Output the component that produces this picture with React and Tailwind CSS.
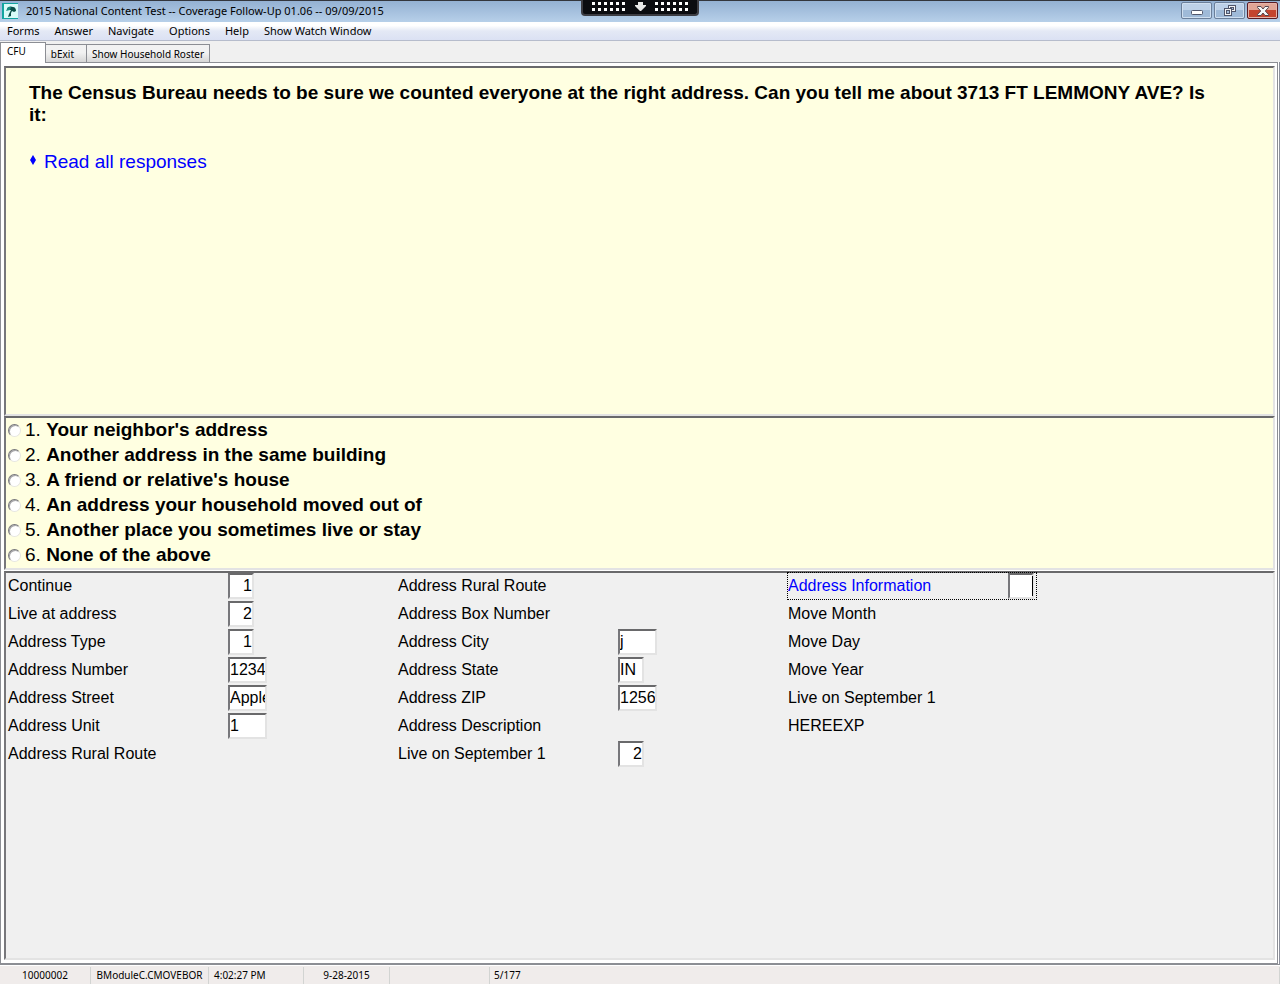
import { useState } from 'react'

const menus = ['Forms', 'Answer', 'Navigate', 'Options', 'Help', 'Show Watch Window']

const answers = [
  "Your neighbor's address",
  'Another address in the same building',
  "A friend or relative's house",
  'An address your household moved out of',
  'Another place you sometimes live or stay',
  'None of the above',
]

// size: "s" and "m" are the two box widths; rows without a size have no entry box
const columns = [
  [
    { id: 'continue', label: 'Continue', value: '1', size: 's', right: true },
    { id: 'live', label: 'Live at address', value: '2', size: 's', right: true },
    { id: 'type', label: 'Address Type', value: '1', size: 's', right: true },
    { id: 'number', label: 'Address Number', value: '1234', size: 'm' },
    { id: 'street', label: 'Address Street', value: 'Apple', size: 'm' },
    { id: 'unit', label: 'Address Unit', value: '1', size: 'm' },
    { id: 'route', label: 'Address Rural Route' },
  ],
  [
    { id: 'route2', label: 'Address Rural Route' },
    { id: 'box', label: 'Address Box Number' },
    { id: 'city', label: 'Address City', value: 'j', size: 'm' },
    { id: 'state', label: 'Address State', value: 'IN', size: 's' },
    { id: 'zip', label: 'Address ZIP', value: '1256', size: 'm' },
    { id: 'description', label: 'Address Description' },
    { id: 'september', label: 'Live on September 1', value: '2', size: 's', right: true },
  ],
  [
    { id: 'info', label: 'Address Information', value: '', size: 's', right: true, active: true },
    { id: 'month', label: 'Move Month' },
    { id: 'day', label: 'Move Day' },
    { id: 'year', label: 'Move Year' },
    { id: 'september2', label: 'Live on September 1' },
    { id: 'hereexp', label: 'HEREEXP' },
  ],
]

const sunken = 'border-2 border-t-[#69696b] border-l-[#77777b] border-r-[#e3e3e3] border-b-[#e3e3e3]'

function AppIcon() {
  return (
    <svg viewBox="0 0 16 16" className="h-4 w-4 shrink-0">
      <rect width="16" height="16" fill="#12a5a0" />
      <rect x="2" y="1" width="14" height="14" fill="#d9fbf8" />
      <path d="M5 6 C6 3 9 3 11 4 C13 4 14 6 14 8 L12 9 L10 8 L9 10 L9 13 L6 14 L7 11 L9 7 L7 7 Z" fill="#0b4f49" />
      <path d="M4 8 L6 4 L9 4 L8 7 Z" fill="#1c8c83" />
    </svg>
  )
}

function DotGrid() {
  return (
    <svg viewBox="0 0 33 9" className="h-[9px] w-[33px]" shapeRendering="crispEdges">
      {[0, 6, 12, 18, 24, 30].map((x) => (
        <g key={x} fill="#fff">
          <rect x={x} y="0" width="3" height="3" />
          <rect x={x} y="6" width="3" height="3" />
        </g>
      ))}
    </svg>
  )
}

function ConnectionBar() {
  return (
    <div className="absolute -top-px left-1/2 flex h-4 w-[118px] -translate-x-1/2 items-start justify-between rounded-b-[4px] border-2 border-t-0 border-[#3c3c42] bg-[#0b0c10] px-[9px] pt-[2px]">
      <DotGrid />
      <svg viewBox="0 0 11 9" className="h-[9px] w-[11px]" fill="#e8e8e8">
        <path d="M3 0 H8 V3 H11 V4 L6 9 H5 L0 4 V3 H3 Z" />
      </svg>
      <DotGrid />
    </div>
  )
}

function WindowButton({ label, close, children }) {
  return (
    <button
      aria-label={label}
      className={
        close
          ? 'flex h-[17px] w-[31px] items-center justify-center rounded-[2px] border border-[#5a1c24] bg-linear-to-b from-[#e0a596] from-45% to-[#c4442e] to-50% shadow-[inset_0_0_0_1px_#e6b3a8]'
          : 'flex h-[17px] w-[31px] items-center justify-center rounded-[2px] border border-[#6b7f9a] bg-linear-to-b from-[#bdd1e8] from-45% to-[#9fbad8] to-50% shadow-[inset_0_0_0_1px_#cfdff0]'
      }
    >
      {children}
    </button>
  )
}

function TitleBar() {
  return (
    <header className="relative flex h-[22px] items-center border-t border-[#33363d] bg-linear-to-b from-[#94b1d3] to-[#b7d0e9] px-[2px] pb-[2px]">
      <AppIcon />
      <h1 className="pl-2 font-['Noto_Sans'] text-[11px] leading-4">
        2015 National Content Test -- Coverage Follow-Up 01.06 -- 09/09/2015
      </h1>
      <ConnectionBar />
      <div className="ml-auto flex gap-[2px]">
        <WindowButton label="Minimize">
          <svg viewBox="0 0 12 6" className="mt-1 h-[6px] w-3">
            <rect x="0.5" y="0.5" width="11" height="4" rx="1" fill="#fff" stroke="#50566b" />
          </svg>
        </WindowButton>
        <WindowButton label="Restore">
          <svg viewBox="0 0 12 11" className="h-[11px] w-3" fill="#f4f4f4" stroke="#50566b">
            <rect x="4.5" y="0.5" width="7" height="6" />
            <rect x="6.5" y="2.5" width="3" height="2" fill="#a6bfdb" />
            <rect x="0.5" y="3.5" width="7" height="7" />
            <rect x="2.5" y="5.5" width="3" height="3" fill="#a6bfdb" />
          </svg>
        </WindowButton>
        <WindowButton label="Close" close>
          <svg viewBox="0 0 12 10" className="h-[10px] w-3">
            <path
              d="M0.5 0.5 H4 L6 3 L8 0.5 H11.5 V1.5 L8.3 5 L11.5 8.5 V9.5 H8 L6 7 L4 9.5 H0.5 V8.5 L3.7 5 L0.5 1.5 Z"
              fill="#f6f6f6"
              stroke="#55444c"
            />
          </svg>
        </WindowButton>
      </div>
    </header>
  )
}

function Tab({ selected, children }) {
  return (
    <button
      role="tab"
      aria-selected={selected}
      className={
        selected
          ? 'relative z-10 -mb-px h-[21px] border border-b-0 border-[#8c8e94] bg-white pr-[19px] pb-1 pl-[6px]'
          : 'h-[18px] border border-b-0 border-l-0 border-[#8c8e94] bg-linear-to-b from-[#f2f2f2] from-45% to-[#d6d6d6] px-[5px]'
      }
    >
      {children}
    </button>
  )
}

function Field({ id, label, value, size, right, active }) {
  return (
    <div className={active ? 'relative flex h-[26px] w-[248px] items-center outline-1 outline-dotted outline-black' : 'flex h-[26px] items-center'}>
      {size ? (
        <>
          <label htmlFor={id} className={active ? 'w-[220px] text-[#0000ff]' : 'w-[220px]'}>
            {label}
          </label>
          <input
            id={id}
            defaultValue={value}
            className={`h-[26px] rounded-none bg-white outline-none ${sunken} ${size === 's' ? 'w-[26px]' : 'w-[39px]'} ${right ? 'text-right' : ''}`}
          />
          {active && <span className="absolute top-[3px] right-[3px] h-5 w-px bg-black" />}
        </>
      ) : (
        <span>{label}</span>
      )}
    </div>
  )
}

function StatusCell({ className, children }) {
  return <div className={`flex items-center border-r border-[#d2d4d2] whitespace-nowrap ${className}`}>{children}</div>
}

export default function App() {
  const [answer, setAnswer] = useState(null)

  return (
    <div className="flex min-h-screen flex-col bg-[#f0f0f0] font-['Liberation_Sans',sans-serif] text-black">
      <TitleBar />
      <nav className="flex h-[19px] items-center gap-[15px] border-b border-[#b6bccc] bg-linear-to-b from-white from-20% via-[#e4e9f5] via-50% to-[#dbe1f3] pl-[7px] font-['Noto_Sans'] text-[11px] leading-4">
        {menus.map((menu) => (
          <button key={menu}>{menu}</button>
        ))}
      </nav>

      <div role="tablist" className="flex h-[21px] items-end font-['Noto_Sans'] text-[10px] leading-4">
        <Tab selected>CFU</Tab>
        <Tab>
          <span className="pr-[7px]">bExit</span>
        </Tab>
        <Tab>Show Household Roster</Tab>
      </div>

      <div className="flex grow flex-col border-r border-[#8c909c] bg-white pr-px">
        <main className="flex grow flex-col border border-[#8c8e94] bg-white p-[3px] pr-[2px]">
          <section className={`min-h-[350px] bg-[#ffffe1] pt-[14px] pr-14 pl-[23px] text-[19px] leading-[22px] ${sunken}`}>
            <p className="font-bold">
              The Census Bureau needs to be sure we counted everyone at the right address. Can you tell me about 3713 FT
              LEMMONY AVE? Is it:
            </p>
            <p className="mt-[25px] flex items-start gap-[7px] text-[#0000ff]">
              <svg viewBox="0 0 8 10" className="mt-1 h-[10px] w-2" fill="currentColor">
                <path d="M4 0 L7 5 L4 10 L1 5 Z" />
              </svg>
              Read all responses
            </p>
          </section>

          <section className={`bg-[#ffffe1] pl-[2px] text-[19px] ${sunken}`}>
            {answers.map((text, i) => (
              <label key={text} className="flex h-[25px] items-center gap-1">
                <input
                  type="radio"
                  name="answer"
                  checked={answer === i}
                  onChange={() => setAnswer(i)}
                  className="h-[13px] w-[13px] appearance-none rounded-full border border-t-[#77777b] border-r-[#e6e6e0] border-b-[#e6e6e0] border-l-[#77777b] bg-white shadow-[inset_1px_1px_0_#a5a5a8] checked:bg-black"
                />
                <span>
                  {i + 1}. <b>{text}</b>
                </span>
              </label>
            ))}
          </section>

          <section className={`mt-px grid grow grid-cols-[390px_390px_1fr] content-start bg-[#f0f0f0] pl-[2px] text-[16px] leading-5 ${sunken}`}>
            {columns.map((fields, i) => (
              <div key={i} className="flex flex-col gap-[2px]">
                {fields.map((field) => (
                  <Field key={field.id} {...field} />
                ))}
              </div>
            ))}
          </section>
        </main>
      </div>

      <footer className="border-t border-[#8c8e94] bg-white pt-px">
        <div className="flex h-[18px] bg-[#f0eceb] pt-px font-['Noto_Sans'] text-[10px]">
          <StatusCell className="w-[91px] justify-center">10000002</StatusCell>
          <StatusCell className="w-[118px] justify-center">BModuleC.CMOVEBOR</StatusCell>
          <StatusCell className="w-[95px] pl-[5px]">4:02:27 PM</StatusCell>
          <StatusCell className="w-[86px] justify-center">9-28-2015</StatusCell>
          <StatusCell className="w-[100px]" />
          <StatusCell className="grow pl-1">5/177</StatusCell>
        </div>
      </footer>
    </div>
  )
}
